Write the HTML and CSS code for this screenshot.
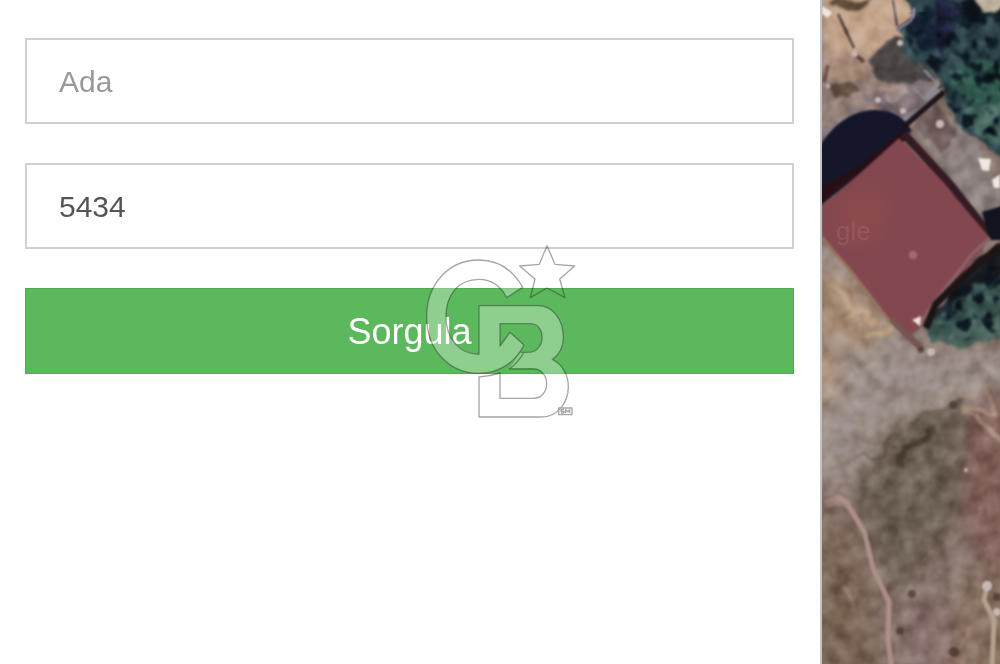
FILE: index.html
```html
<!DOCTYPE html>
<html lang="tr">
<head>
    <meta charset="UTF-8">
    <meta name="viewport" content="width=device-width, initial-scale=1.0">
    <title>Parsel Sorgu</title>
    <link rel="stylesheet" href="styles.css">
</head>
<body>
    <main class="page">
        <form class="query-form">
            <input class="field" type="text" name="ada" placeholder="Ada" aria-label="Ada">
            <input class="field" type="text" name="parsel" value="5434" aria-label="Parsel">
            <button class="submit-button" type="button">Sorgula</button>
        </form>

        <div class="map">
            <svg class="map-image" viewBox="822 0 178 664" preserveAspectRatio="xMidYMid slice" aria-hidden="true">
                <defs>
                    <filter id="rough" x="-10%" y="-10%" width="120%" height="120%" color-interpolation-filters="sRGB">
                        <feTurbulence type="fractalNoise" baseFrequency="0.06" numOctaves="2" seed="4" result="n"/>
                        <feDisplacementMap in="SourceGraphic" in2="n" scale="14" xChannelSelector="R" yChannelSelector="G"/>
                        <feGaussianBlur stdDeviation="1.5"/>
                    </filter>
                    <filter id="soft" x="-10%" y="-10%" width="120%" height="120%" color-interpolation-filters="sRGB">
                        <feGaussianBlur stdDeviation="1"/>
                    </filter>
                    <filter id="haze" x="-30%" y="-30%" width="160%" height="160%" color-interpolation-filters="sRGB">
                        <feGaussianBlur stdDeviation="9"/>
                    </filter>
                    <filter id="grain" x="0" y="0" width="100%" height="100%" color-interpolation-filters="sRGB">
                        <feTurbulence type="fractalNoise" baseFrequency="0.06" numOctaves="3" seed="9"/>
                        <feColorMatrix values="1.5 0 0 0 -0.25  1.5 0 0 0 -0.25  1.5 0 0 0 -0.25  0 0 0 0 1"/>
                        <feGaussianBlur stdDeviation="1"/>
                    </filter>
                    <filter id="leaves" x="0" y="0" width="100%" height="100%" color-interpolation-filters="sRGB">
                        <feTurbulence type="fractalNoise" baseFrequency="0.07" numOctaves="2" seed="21"/>
                        <feColorMatrix values="0 0 0 0 0.05  0 0 0 0 0.09  0 0 0 0 0.13  6 0 0 0 -2.9" result="d"/>
                        <feComposite in="d" in2="SourceAlpha" operator="in"/>
                        <feGaussianBlur stdDeviation="1"/>
                    </filter>
                </defs>

                <!-- ground -->
                <rect x="822" y="0" width="178" height="664" fill="#85726a"/>
                <g filter="url(#haze)">
                    <path d="M810 -20H920V60L880 70 822 60Z" fill="#c4a58c"/>
                    <path d="M810 60H890L920 120 850 130 810 160Z" fill="#947f78"/>
                    <path d="M810 240L850 265 915 345 1010 350V385L940 415 885 460 840 490 810 490Z" fill="#9b8d87"/>
                    <path d="M810 265L850 275 890 320 870 350 810 340Z" fill="#a58b75"/>
                    <path d="M810 350H836V400H810Z" fill="#b29780"/>
                    <path d="M1010 385V580L985 570 960 500 955 430Z" fill="#805f59"/>
                    <path d="M900 415L965 405 960 510 900 590 865 520 855 480Z" fill="#706356"/>
                    <path d="M810 520L850 520 875 600 880 680H810Z" fill="#7b6555"/>
                    <path d="M895 600L950 590 960 680H895Z" fill="#876f6b"/>
                    <path d="M955 590L1010 560V680H950Z" fill="#877060"/>
                </g>
                <path d="M850 495L885 462 890 442 930 415 962 402 970 440 955 520 905 590 884 570Z" fill="#6c5f53" opacity=".5" filter="url(#rough)"/>

                <!-- yard above the roof -->
                <g filter="url(#rough)">
                    <path d="M828 0H872L858 12 838 8Z" fill="#665440"/>
                    <path d="M830 62L870 66 866 80 828 78Z" fill="#a78b78"/>
                    <path d="M828 84L850 82 858 93 836 100Z" fill="#5e4a3c"/>
                    <path d="M868 58L895 36 920 46 934 80 905 84 878 80Z" fill="#4b4645"/>
                    <path d="M870 95L900 82 930 80 938 96 910 122 890 116Z" fill="#7d6d72"/>
                    <path d="M880 88L906 84 912 96 890 102Z" fill="#a5928e"/>
                    <path d="M822 128L860 106 880 112 822 150Z" fill="#85797d"/>
                    <path d="M914 128L935 104 975 138 1000 190V228L960 196Z" fill="#8b807d"/>
                    <path d="M912 125L938 104 956 130 945 155Z" fill="#6d5a59"/>
                </g>
                <g filter="url(#soft)" fill="none">
                    <path d="M838 14L854 48" stroke="#54403a" stroke-width="3"/>
                    <path d="M893 0L897 26" stroke="#514658" stroke-width="2"/>
                    <path d="M864 98L884 102 900 122 917 110" stroke="#827984" stroke-width="4"/>
                    <path d="M824 82L828 65M855 54L864 62" stroke="#6b4940" stroke-width="4"/>
                </g>

                <!-- trees -->
                <g filter="url(#rough)">
                    <path d="M906 -8H1010V160L985 145 960 128 946 98 932 72 902 54 900 28 912 18Z" fill="#2d444a"/>
                    <path d="M904 24L925 8 945 20 942 50 920 48Z" fill="#17283a"/>
                    <path d="M934 0H962L956 28 942 60 932 30Z" fill="#1d223b"/>
                    <path d="M950 0H1010V15L978 18 958 20Z" fill="#10171e"/>
                    <path d="M962 -12H1014V8L984 12Z" fill="#c1b5a0"/>
                    <path d="M950 72L980 58 1010 65V105L975 102 950 92Z" fill="#345d51"/>
                    <path d="M960 106L1010 102V148L975 136Z" fill="#466860"/>
                    <path d="M924 322L950 292 980 262 1010 240V336L960 346 928 340Z" fill="#38534f"/>
                    <path d="M926 320L950 290 970 270 1010 235V268L970 290 945 312Z" fill="#181c21"/>
                    <path d="M940 340L980 318 1010 312V334L965 348Z" fill="#4f6862"/>
                </g>
                <g filter="url(#leaves)">
                    <path d="M908 12H1002V146L965 128 940 95 930 66 904 42Z"/>
                    <path d="M928 324L950 300 1002 250V330L962 342Z"/>
                </g>
                <g filter="url(#soft)" fill="none">
                    <path d="M897 30C904 22 914 26 914 8" stroke="#8b8398" stroke-width="3"/>
                    <path d="M924 70L938 84 924 99 914 88M926 100L944 88" stroke="#85838c" stroke-width="3"/>
                </g>

                <!-- paths and clearings -->
                <g filter="url(#rough)" fill="none">
                    <path d="M820 503L850 503" stroke="#a48b82" stroke-width="10"/>
                    <path d="M832 285L858 310 842 322M865 340L895 328M850 300L875 325" stroke="#bd9d80" stroke-width="4"/>
                    <path d="M855 457L880 458 898 435 930 414 965 400" stroke="#635147" stroke-width="3" opacity=".7"/>
                    <path d="M960 398L985 386 994 412 968 410 1000 440" stroke="#a48b7b" stroke-width="4"/>
                    <path d="M900 470L905 446 935 430" stroke="#51443a" stroke-width="7"/>
                    <path d="M958 650L972 625M940 650L965 664M845 585L858 615" stroke="#9b8171" stroke-width="3"/>
                </g>

                <rect class="map-grain" x="822" y="0" width="178" height="664" filter="url(#grain)"/>

                <!-- footpath -->
                <g filter="url(#soft)" fill="none">
                    <path d="M836 496L846 502 864 531 873 568 889 602 888 640 893 680" stroke="#ad9087" stroke-width="5" stroke-linejoin="round"/>
                    <path d="M988 582L984 600 994 620 992 670" stroke="#b7a28f" stroke-width="5"/>
                </g>

                <!-- roof and its shadow -->
                <g filter="url(#soft)">
                    <path d="M820 146C832 126 852 109 876 110S906 122 912 131L897 139 855 178 820 206Z" fill="#15162a"/>
                    <path d="M820 188L862 164 900 132 906 140 835 192 820 206Z" fill="#270e16"/>
                    <path d="M900 130L944 92" stroke="#1c1318" stroke-width="5"/>
                    <path d="M904 134L950 184 990 235" fill="none" stroke="#321b22" stroke-width="8"/>
                    <path d="M982 212L1002 206V240L990 240Z" fill="#11131e"/>
                    <path d="M899 138L942 181 990 238 976 258 936 306 918 330 905 338 888 318 850 272 822 234V206L848 184Z" fill="#834750"/>
                    <path d="M990 238L974 252 936 300 918 326" fill="none" stroke="#8b656a" stroke-width="3"/>
                    <path d="M890 318L922 349" stroke="#76544f" stroke-width="6"/>
                    <path d="M926 328L936 304 964 276 1000 246" fill="none" stroke="#1d1416" stroke-width="7"/>
                    <path d="M822 238L850 270 890 322" fill="none" stroke="#98755f" stroke-width="3"/>
                    <circle cx="913" cy="255" r="4" fill="#a66c75"/>
                </g>
                <path d="M835 208L862 185 890 200 880 240 850 250Z" fill="#95504b" opacity=".4" filter="url(#haze)"/>
                <text class="map-label" x="836" y="240">gle</text>

                <g filter="url(#soft)">
                    <g fill="#f0e8e2">
                        <path d="M822 6L832 12 828 18 822 14Z"/>
                        <path d="M978 158L991 159 989 171 982 170Z"/>
                        <path d="M992 180L1000 174V188H994Z"/>
                        <path d="M912 320L921 316 920 326Z"/>
                    </g>
                    <g fill="#c8b9b4">
                        <circle cx="900" cy="43" r="3"/>
                        <circle cx="855" cy="54" r="3"/>
                        <circle cx="828" cy="86" r="2"/>
                        <circle cx="878" cy="100" r="3"/>
                        <circle cx="903" cy="111" r="3"/>
                        <circle cx="940" cy="124" r="4"/>
                        <circle cx="931" cy="352" r="4"/>
                        <circle cx="966" cy="470" r="2"/>
                        <circle cx="987" cy="586" r="5"/>
                        <circle cx="997" cy="612" r="4"/>
                    </g>
                    <g fill="#46302b" opacity=".7">
                        <circle cx="912" cy="594" r="4"/>
                        <circle cx="900" cy="631" r="4"/>
                        <circle cx="954" cy="652" r="5"/>
                        <circle cx="953" cy="405" r="4"/>
                        <circle cx="921" cy="350" r="3"/>
                        <circle cx="997" cy="597" r="4"/>
                    </g>
                </g>
            </svg>
        </div>

        <svg class="watermark" viewBox="0 0 540 582" aria-hidden="true">
            <g class="watermark-fill">
                <path d="M338 157C306 101 260 75 207 75C115 75 50 148 50 245C50 345 118 415 207 415C268 415 316 382 342 330L300 292L270 333V266H362C409 266 409 352 355 352H332L298 400H370C385 402 396 408 402 420H464C458 398 445 383 427 373C448 358 460 335 460 308C460 250 425 212 385 212H207V358C150 352 108 312 108 245C108 178 146 133 207 133C244 133 274 154 290 188Z"/>
            </g>
            <g class="watermark-line">
                <path d="M355 352H332M342 330C316 382 268 415 207 415C118 415 50 345 50 245C50 148 115 75 207 75C260 75 306 101 338 157L290 188C274 154 244 133 207 133C146 133 108 178 108 245C108 312 150 358 207 358V212H385C425 212 460 250 460 308C460 335 448 358 427 373C460 390 475 422 475 455C475 505 440 546 395 546H207V426C232 424 252 420 270 414V490H370C423 490 423 402 370 402H298C312 392 330 372 342 352"/>
                <path d="M342 330L300 292L270 333V266H362C409 266 409 352 355 352"/>
                <path d="M411 32L435 88L494 93L449 132L465 188L411 159L361 188L375 132L329 93L388 88Z"/>
                <rect x="446" y="519" width="40" height="20"/>
                <path d="M462 524H453V529H462V534H453M467 534V524L473 530L479 524V534"/>
            </g>
        </svg>
    </main>
</body>
</html>
```

FILE: styles.css
```css
* {
    box-sizing: border-box;
}
body {
    margin: 0;
    font-family: "Liberation Sans", Arial, sans-serif;
    background-color: #fff;
}
.page {
    position: relative;
    display: flex;
    min-height: 100vh;
}
.query-form {
    flex: 1;
    display: flex;
    flex-direction: column;
    gap: 39px;
    padding: 38px 26px 38px 25px;
}
.field {
    width: 100%;
    height: 86px;
    padding: 2px 32px 0;
    border: 2px solid #d0d0d0;
    border-radius: 0;
    background-color: #fff;
    color: #555;
    font-family: inherit;
    font-size: 30px;
}
.field::placeholder {
    color: #999;
    opacity: 1;
}
.submit-button {
    height: 86px;
    padding: 2px 0 0;
    border: 1px solid #4cae4c;
    background-color: #5cb85c;
    color: #fff;
    font-family: inherit;
    font-size: 36px;
    cursor: pointer;
}
.map {
    position: relative;
    width: 18%;
    border-left: 2px solid #c4c4c4;
    overflow: hidden;
}
.map-image {
    position: absolute;
    width: 100%;
    height: 100%;
}
.map-grain {
    mix-blend-mode: soft-light;
    opacity: 0.45;
}
.map-label {
    fill: #b98080;
    font-size: 26px;
    opacity: 0.25;
}
.watermark {
    position: absolute;
    top: 50%;
    left: 50%;
    width: 180px;
    transform: translate(-50%, -50%);
    pointer-events: none;
}
.watermark-fill {
    fill: #fff;
    opacity: 0.31;
}
.watermark-line {
    fill: none;
    stroke: #222;
    stroke-width: 4;
    stroke-linejoin: round;
    opacity: 0.4;
}
```
